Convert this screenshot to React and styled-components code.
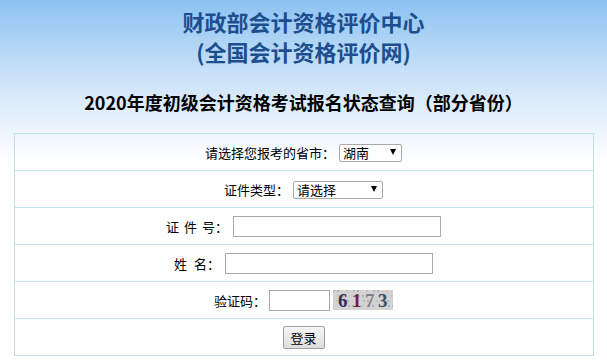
import React from "react";
import styled, { createGlobalStyle } from "styled-components";

const GlobalStyle = createGlobalStyle`
  html, body {
    margin: 0;
    padding: 0;
  }
  body {
    min-height: 364px;
    background: linear-gradient(#8cc2f1 0px, #c6e0f8 70px, #eaf3fd 125px, #ffffff 165px) no-repeat;
    background-color: #fff;
    font-family: "Liberation Sans", "Noto Sans CJK SC", sans-serif;
  }
`;

const Page = styled.div`
  display: flex;
  flex-direction: column;
  align-items: center;
  padding-top: 6px;
`;

const SiteTitle = styled.h1`
  margin: 0;
  font-family: "Noto Sans CJK SC", sans-serif;
  font-size: 22px;
  font-weight: 700;
  line-height: 30px;
  color: #1d4f90;
  text-align: center;
`;

const Heading = styled.h2`
  margin: 24px 0 19px;
  font-family: "Noto Sans CJK SC", sans-serif;
  font-size: 18px;
  font-weight: 700;
  line-height: 24px;
  color: #000;
  text-align: center;
`;

const Form = styled.div`
  width: 580px;
  border: 1px solid #c2e1ee;
  border-bottom: none;
  box-sizing: border-box;
`;

const Row = styled.div`
  height: 36px;
  border-bottom: 1px solid #c2e1ee;
  display: flex;
  align-items: center;
  justify-content: center;
  gap: ${(p) => p.$gap || 4}px;
  font-family: "Noto Sans CJK SC", sans-serif;
  font-size: 13px;
  color: #000;
`;

const Label = styled.span`
  white-space: pre;
  word-spacing: ${(p) => p.$wide || 0}px;
`;

const SelectWrap = styled.div`
  position: relative;
  width: ${(p) => p.$width}px;
  height: 18px;
`;

const Select = styled.select`
  appearance: none;
  width: 100%;
  height: 100%;
  box-sizing: border-box;
  border: 1px solid #a9a9a9;
  border-radius: 2px;
  background: #fff;
  padding: 0 0 0 3px;
  font-family: "Noto Sans CJK SC", sans-serif;
  font-size: 13px;
  color: #000;
  line-height: 16px;
  outline: none;
`;

const Arrow = styled.span`
  position: absolute;
  right: 6px;
  top: 6px;
  width: 0;
  height: 0;
  border-left: 3.5px solid transparent;
  border-right: 3.5px solid transparent;
  border-top: 6px solid #000;
  pointer-events: none;
`;

const Input = styled.input`
  width: ${(p) => p.$width}px;
  height: 21px;
  box-sizing: border-box;
  border: 1px solid #a9a9a9;
  padding: 0 2px;
  background: #fff;
  outline: none;
`;

const Captcha = styled.svg`
  display: block;
  width: 60px;
  height: 20px;
`;

const Button = styled.button`
  width: 42px;
  height: 23px;
  border: 1px solid #a0a0a0;
  border-radius: 2px;
  background: linear-gradient(#f6f6f6, #dddddd);
  font-family: "Noto Sans CJK SC", sans-serif;
  font-size: 13px;
  color: #000;
  padding: 0;
`;

const noise = Array.from({ length: 140 }, (_, i) => ({
  x: (i * 37) % 60,
  y: (i * 13 + ((i * 7) % 5)) % 20,
  c: ["#b8b4a8", "#cfd3dc", "#a9aebb", "#d9d2c4", "#bfc4cf"][i % 5],
}));

const CaptchaImage = () => (
  <Captcha viewBox="0 0 60 20">
    <rect width="60" height="20" fill="#d3d2d0" />
    {noise.map((n, i) => (
      <rect key={i} x={n.x} y={n.y} width="2" height="1.5" fill={n.c} />
    ))}
    <g fontFamily="'Liberation Serif', serif" fontSize="19" fontWeight="700">
      <text x="5" y="17" fill="#3a2a5c">6</text>
      <text x="19" y="17" fill="#6b1f45">1</text>
      <text x="32" y="17" fill="#7d7f8c">7</text>
      <text x="45" y="17" fill="#3f5462">3</text>
    </g>
  </Captcha>
);

export default function App() {
  return (
    <>
      <GlobalStyle />
      <Page>
        <SiteTitle>
          财政部会计资格评价中心
          <br />
          (全国会计资格评价网)
        </SiteTitle>
        <Heading>2020年度初级会计资格考试报名状态查询（部分省份）</Heading>
        <Form>
          <Row>
            <Label>请选择您报考的省市：</Label>
            <SelectWrap $width={63}>
              <Select defaultValue="湖南">
                <option>湖南</option>
              </Select>
              <Arrow />
            </SelectWrap>
          </Row>
          <Row>
            <Label>证件类型：</Label>
            <SelectWrap $width={90}>
              <Select defaultValue="请选择">
                <option>请选择</option>
              </Select>
              <Arrow />
            </SelectWrap>
          </Row>
          <Row $gap={5}>
            <Label $wide={2}>证 件 号：</Label>
            <Input $width={208} />
          </Row>
          <Row $gap={5}>
            <Label $wide={4}>姓 名：</Label>
            <Input $width={208} />
          </Row>
          <Row $gap={3}>
            <Label>验证码：</Label>
            <Input $width={61} />
            <CaptchaImage />
          </Row>
          <Row>
            <Button>登录</Button>
          </Row>
        </Form>
      </Page>
    </>
  );
}
